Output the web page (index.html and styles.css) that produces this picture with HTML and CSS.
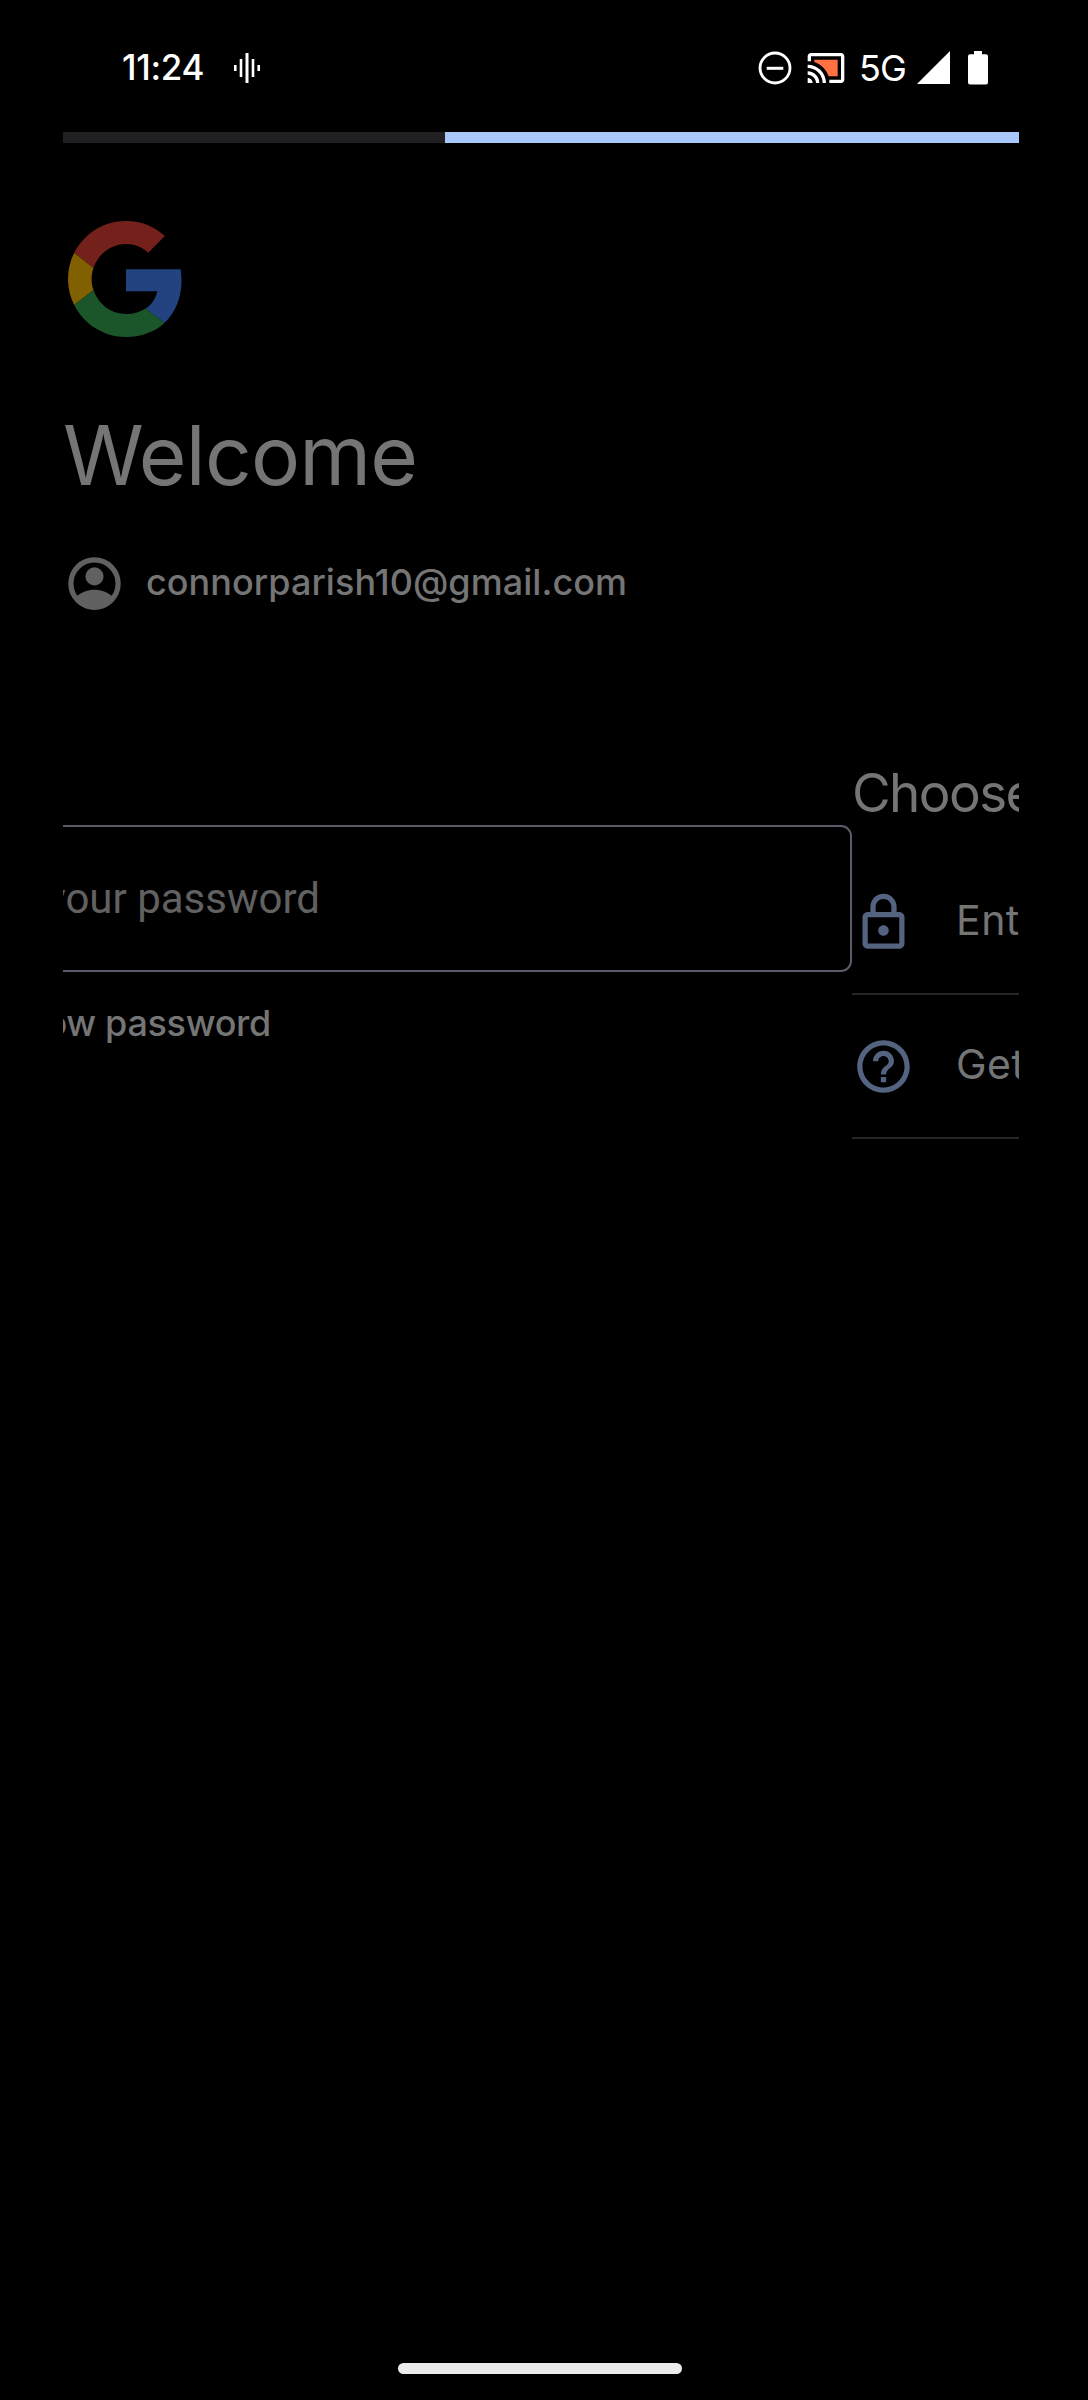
FILE: index.html
```html
<!DOCTYPE html>
<html lang="en">
<head>
<meta charset="utf-8">
<title>Welcome</title>
<link rel="stylesheet" href="styles.css">
</head>
<body>
<div class="screen">
  <header class="status">
    <div class="status-left">
      <span class="clock">11:24</span>
      <svg class="wave" viewBox="0 0 28 32" width="28" height="32"><path fill="#fff" d="M1 13h2.6v6H1zM6.7 7h2.6v18H6.7zM12.5 1h3v30h-3zM18.7 7h2.6v18h-2.6zM24.4 13H27v6h-2.6z"/></svg>
    </div>
    <div class="status-right">
      <svg class="dnd" viewBox="0 0 34 34" width="34" height="34"><circle cx="17" cy="17" r="15" fill="none" stroke="#fff" stroke-width="2.8"/><path stroke="#fff" stroke-width="3" d="M8.7 17.3h16.6"/></svg>
      <svg class="cast" viewBox="0 0 24 24" width="40" height="40"><path fill="#fff" d="M1 18v3h3c0-1.66-1.34-3-3-3zm0-4v2c2.76 0 5 2.24 5 5h2c0-3.87-3.13-7-7-7zm0-4v2c4.97 0 9 4.03 9 9h2c0-6.08-4.93-11-11-11zm20-7H3c-1.1 0-2 .9-2 2v3h2V5h18v14h-7v2h7c1.1 0 2-.9 2-2V5c0-1.1-.9-2-2-2z"/><path fill="#ff7043" d="M19 7H5v1.4c3.96 1.28 7.3 4.64 8.58 8.6H19z"/></svg>
      <span class="network">5G</span>
      <svg class="signal" viewBox="0 0 33 33" width="33" height="33"><path fill="#fff" d="M0 33 33 0v33z"/></svg>
      <svg class="battery" viewBox="0 0 20 34" width="20" height="34"><path fill="#fff" d="M6 0h8v3.3h4a2 2 0 0 1 2 2V31.500a2 2 0 0 1-2 2H2a2 2 0 0 1-2-2V5.300a2 2 0 0 1 2-2h4z"/></svg>
    </div>
  </header>
  <main class="card">
    <div class="progress"><div class="progress-bar"></div></div>
    <svg class="logo" viewBox="0 0 48 48" width="116" height="116">
      <path fill="#75211b" d="M24 9.500c3.540 0 6.710 1.220 9.210 3.600l6.850-6.850C35.900 2.380 30.470 0 24 0 14.620 0 6.510 5.380 2.560 13.220l7.980 6.190C12.430 13.720 17.740 9.500 24 9.500z"/>
      <path fill="#234380" d="M46.980 24.550c0-1.570-.15-3.090-.38-4.550H24v9.020h12.940c-.58 2.960-2.260 5.480-4.780 7.180l7.730 6c4.510-4.180 7.090-10.360 7.090-17.650z"/>
      <path fill="#806000" d="M10.530 28.590c-.48-1.450-.76-2.990-.76-4.590s.27-3.140.76-4.590l-7.980-6.190C.92 16.460 0 20.120 0 24c0 3.880.92 7.540 2.560 10.780l7.970-6.190z"/>
      <path fill="#1b562a" d="M24 48c6.480 0 11.930-2.130 15.890-5.810l-7.730-6c-2.150 1.450-4.920 2.300-8.160 2.300-6.260 0-11.570-4.220-13.470-9.910l-7.980 6.190C6.510 42.620 14.620 48 24 48z"/>
    </svg>
    <h1 class="title">Welcome</h1>
    <div class="account">
      <svg viewBox="0 0 24 24" width="63" height="63"><circle cx="12" cy="12" r="9" fill="none" stroke="#616161" stroke-width="2"/><circle cx="12" cy="9.300" r="3.450" fill="#616161"/><path fill="#616161" d="M4.900 17.200C7 15.200 9.600 14.400 12 14.400s5 .8 7.100 2.800l.6 1.100C18 20.500 15.200 22 12 22s-6-1.500-7.700-3.700z"/></svg>
      <span class="email">connorparish10@gmail.com</span>
    </div>
    <div class="slider">
      <section class="panel-password">
        <div class="field"><span class="placeholder">Enter your password</span></div>
        <div class="show">Show password</div>
      </section>
      <section class="panel-choose">
        <h2 class="choose">Choose how you want to sign in:</h2>
        <div class="option">
          <svg viewBox="0 0 24 24" width="63" height="63"><path fill="#546380" d="M18 8h-1V6c0-2.760-2.240-5-5-5S7 3.240 7 6v2H6c-1.100 0-2 .9-2 2v10c0 1.100.9 2 2 2h12c1.100 0 2-.9 2-2V10c0-1.100-.9-2-2-2zM9 6c0-1.660 1.340-3 3-3s3 1.340 3 3v2H9V6zm9 14H6V10h12v10zm-6-3c1.100 0 2-.9 2-2s-.9-2-2-2-2 .9-2 2 .9 2 2 2z"/></svg>
          <span>Enter your password</span>
        </div>
        <div class="option">
          <svg viewBox="0 0 24 24" width="63" height="63"><path fill="#546380" d="M11 18h2v-2h-2v2zm1-16C6.480 2 2 6.480 2 12s4.480 10 10 10 10-4.480 10-10S17.520 2 12 2zm0 18c-4.410 0-8-3.590-8-8s3.590-8 8-8 8 3.590 8 8-3.590 8-8 8zm0-14c-2.210 0-4 1.790-4 4h2c0-1.100.9-2 2-2s2 .9 2 2c0 2-3 1.750-3 5h2c0-2.250 3-2.500 3-5 0-2.210-1.790-4-4-4z"/></svg>
          <span>Get help</span>
        </div>
      </section>
    </div>
  </main>
  <div class="home"></div>
</div>
</body>
</html>
```
FILE: styles.css
```css
* { box-sizing: border-box; }
body { margin: 0; background: #000; }
svg { display: block; flex: none; }
h1, h2 { margin: 0; font-weight: 400; }
.screen {
  width: 1088px; height: 2400px; background: #000; overflow: hidden;
  display: flex; flex-direction: column;
  font-family: Inter, "Liberation Sans", sans-serif;
}
.status {
  height: 132px; padding: 50px 100px 0 122px; flex: none;
  display: flex; justify-content: space-between; align-items: flex-start; color: #fff;
}
.status-left, .status-right { display: flex; height: 35px; align-items: center; }
.clock { font-size: 35px; font-weight: 500; line-height: 35px; letter-spacing: -0.3px; width: 111px; }
.network { font-size: 36px; line-height: 36px; letter-spacing: -1px; margin-left: 13px; width: 58px; }
.cast { margin-left: 14px; }
.battery { margin-left: 18px; }
.card {
  width: 956px; margin-left: 63px; flex: 1; overflow: hidden;
  display: flex; flex-direction: column;
}
.progress { height: 11px; background: #202022; display: flex; justify-content: flex-end; flex: none; }
.progress-bar { width: 574px; background: #a8c7fa; }
.logo { margin: 78px 0 0 5px; }
.title {
  font-size: 82px; line-height: 100px; margin-top: 69px; height: 100px;
  letter-spacing: -0.8px; color: #757575; white-space: nowrap;
}
.account { height: 63px; margin-top: 46px; display: flex; align-items: center; flex: none; }
.email { margin: 0 0 3px 20px; font-size: 36px; font-weight: 500; color: #757575; line-height: 44px; letter-spacing: 0.05px; }
.slider { display: flex; margin: 150px 0 0 -105px; width: 1400px; }
.panel-password { width: 894px; padding-top: 60px; flex: none; }
.field { height: 147px; border: 2px solid #5b5b6b; border-radius: 11px; display: flex; align-items: center; }
.placeholder {
  font-family: Roboto, sans-serif; font-size: 42px; line-height: 50px; color: #616161;
  width: 360px; display: flex; justify-content: flex-end; white-space: nowrap;
}
.show {
  margin-top: 29px; width: 313px; display: flex; justify-content: flex-end; white-space: nowrap;
  font-size: 36px; font-weight: 500; line-height: 44px; letter-spacing: -0.3px; color: #757575;
}
.panel-choose { width: 500px; flex: none; }
.choose {
  font-size: 53px; line-height: 56px; height: 86px; letter-spacing: -1.6px;
  color: #757575; white-space: nowrap;
}
.option {
  height: 144px; border-bottom: 2px solid #262626; display: flex; align-items: center;
  font-size: 41px; line-height: 50px; color: #757575; white-space: nowrap;
}
.option span { margin: 0 0 5px 41px; letter-spacing: 0.5px; }
.home { width: 284px; height: 11px; border-radius: 6px; background: #ebebeb; margin: 0 0 26px 398px; flex: none; }
```
